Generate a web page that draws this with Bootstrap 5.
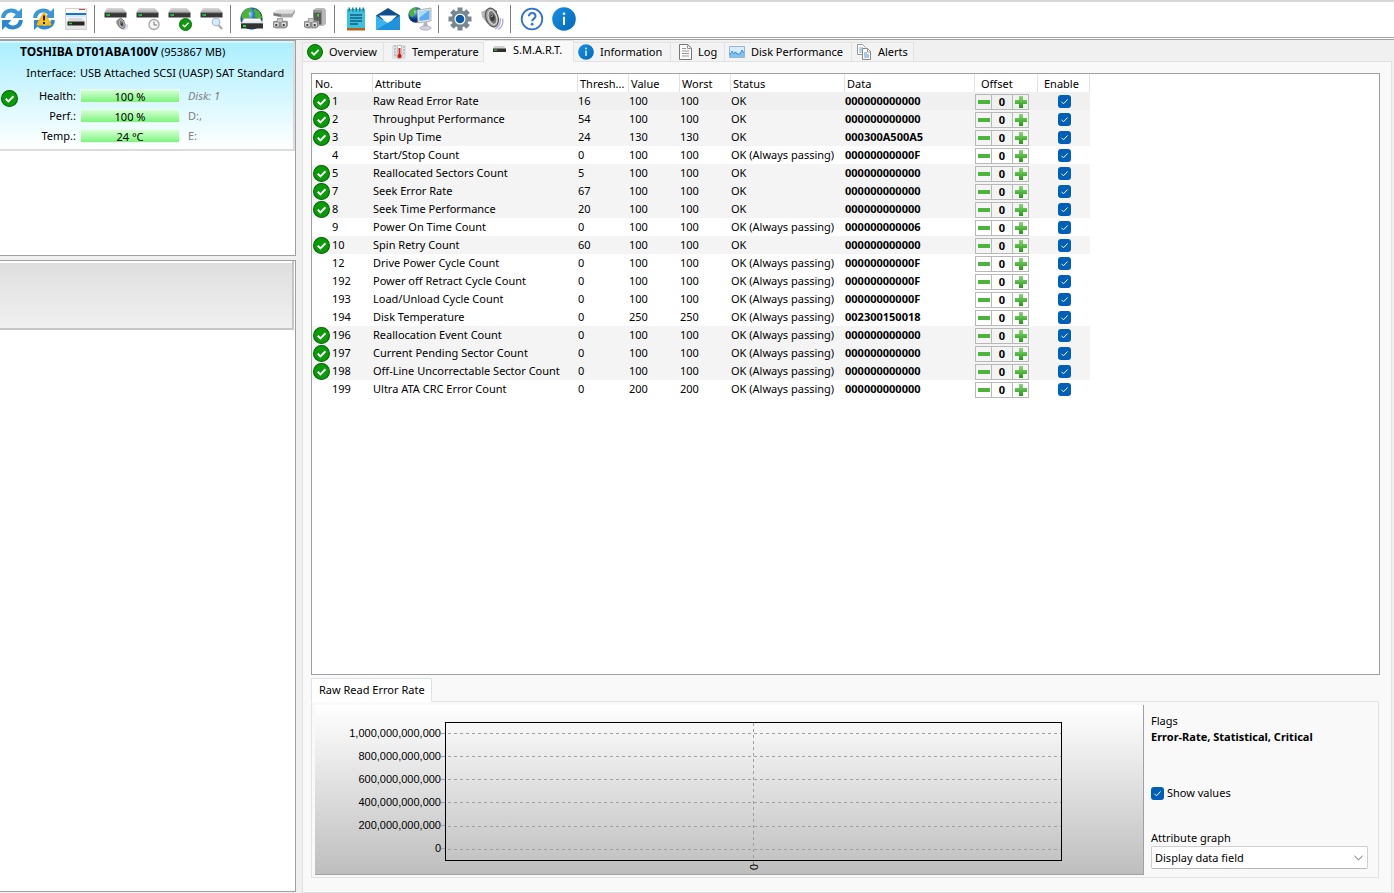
<!DOCTYPE html>
<html lang="en">
<head>
<meta charset="utf-8">
<meta name="viewport" content="width=device-width, initial-scale=1">
<title>Disk monitor - S.M.A.R.T.</title>
<link href="https://cdn.jsdelivr.net/npm/bootstrap@5.3.0/dist/css/bootstrap.min.css" rel="stylesheet">
<style>
  body { font-family: "Noto Sans", "Open Sans", sans-serif; font-size: 11px; line-height: 16px; color: #000; background: #f0f0f0; }
  button { color: inherit; }
  svg { display: block; flex: none; }

  /* toolbar */
  .toolbar { height: 40px; padding-bottom: 1px; background: #fff; border-top: 2px solid #d8d8d8; border-bottom: 3px double #a0a0a0; }
  .toolbar .group + .group { margin-left: 6px; padding-left: 9px; border-left: 1px solid #808080; }
  .tool { width: 24px; height: 28px; padding: 2px 0; border: 0; background: none; }

  /* sidebar */
  .sidebar { width: 296px; padding-bottom: 1px; }
  .panel { background: #fff; border: 1px solid #a0a0a0; border-left: 0; }
  .disk-list { height: 216px; }
  .disk-card { height: 110px; background: linear-gradient(#a9eeff, #fff); border: solid #dcdcdc; border-width: 0 2px 2px 0; box-shadow: inset 0 2px #d4f7ff; }
  .disk-title { padding: 3px 0 0 20px; }
  .disk-title b { font-size: 12px; }
  .disk-facts { display: grid; grid-template-columns: 17px 54px 100px 1fr; column-gap: 4px; grid-auto-rows: 20px; align-items: center; padding-left: 1px; }
  .disk-facts .wide { grid-column: 1 / 3; }
  .disk-facts .rest { grid-column: 3 / 5; }
  .gap-top { margin-top: 3px; }
  .meter { height: 14px; border: 1px solid #e8ffee; background: linear-gradient(#d8ffd8, #7cf57c); line-height: 14px; }
  .dim { color: #808080; }
  .task-panel { height: 69px; margin-right: 1px; background: linear-gradient(#dedede, #f0f0f0); border: solid #c6c6c6; border-width: 0 2px 2px 0; box-shadow: inset 0 2px #fff; }

  /* main tabs */
  .main-area { padding: 0 2px 0 6px; }
  .page-tabs { height: 22px; border: 0; margin-bottom: -1px; align-items: flex-end; position: relative; }
  .page-tabs .nav-link { width: 100%; height: 20px; padding: 0 0 0 4px; margin: 0; gap: 6px; border: 1px solid #e2e2e2; border-left-width: 0; border-radius: 0; background: #f3f3f3; color: #000; white-space: nowrap; }
  .page-tabs .nav-item:first-child .nav-link { border-left-width: 1px; }
  .page-tabs .nav-link.active { height: 22px; background: #f9f9f9; border-color: #e2e2e2 #e2e2e2 #f9f9f9; padding: 0 0 3px 8px; color: #000; }
  .tab-xs { width: 54px; } .tab-s { width: 62px; } .tab-m { width: 82px; } .tab-l { width: 90px; }
  .tab-xl { width: 97px; } .tab-2xl { width: 100px; } .tab-3xl { width: 127px; }
  .page-pane { background: #f9f9f9; border: 1px solid #e2e2e2; padding: 11px 11px 14px 8px; }

  /* attribute table */
  .table-box { background: #fff; border: 1px solid #a0a0a0; min-height: 602px; }
  .attr-table { table-layout: fixed; width: 778px; border-collapse: separate; border-spacing: 0; }
  .attr-table th { height: 18px; padding: 2px 0 0 2px; font-weight: 400; line-height: 16px; border-right: 1px solid #e2e2e2; white-space: nowrap; overflow: hidden; }
  .attr-table th.first { padding-left: 3px; }
  .attr-table th.shifted { padding-left: 6px; }
  .attr-table td { height: 18px; padding: 0; line-height: 18px; white-space: nowrap; }
  .attr-table .checked-row td { background: #f4f4f4; }
  .attr-table .selected-row td { background: #f0f0f0; }
  .no-cell { padding-left: 1px; }
  .icon-slot { width: 19px; }
  .c-no { width: 61px; } .c-name { width: 205px; } .c-thr { width: 51px; } .c-num { width: 51px; }
  .c-status { width: 114px; } .c-data { width: 130px; } .c-off { width: 63px; } .c-on { width: 52px; }
  .stepper { height: 16px; width: 54px; margin-top: 1px; }
  .stepper button { width: 17px; padding: 0; border: 1px solid #b8b8b8; background: transparent; display: flex; align-items: center; justify-content: center; }
  .stepper input { width: 20px; min-width: 0; padding: 0; border: solid #b8b8b8; border-width: 1px 0; text-align: center; font-weight: 700; background: transparent; }
  .tick { appearance: none; width: 13px; height: 13px; margin: 0; border-radius: 3px; display: block; flex: none;
    background: #005fb8 url("data:image/svg+xml,%3Csvg xmlns='http://www.w3.org/2000/svg' viewBox='0 0 13 13'%3E%3Cpath d='M3.5 6.8l2 2 4-4.3' fill='none' stroke='%23fff' stroke-width='1'/%3E%3C/svg%3E"); }

  /* attribute details */
  .details { margin-top: 3px; margin-right: 1px; }
  .detail-tabs { border: 0; margin-bottom: -1px; position: relative; }
  .detail-tabs .nav-link { height: 24px; padding: 0 6px 0 7px; border: 1px solid #e2e2e2; border-bottom-color: #f9f9f9; border-radius: 0; margin: 0; background: #f9f9f9; color: #000; }
  .detail-pane { border: 1px solid #e2e2e2; padding: 3px 10px 2px 3px; }
  .chart { height: 170px; padding: 17px 81px 0 0; background: linear-gradient(#fff, #bebebe); border: solid #a0a0a0; border-width: 0 1px 1px 0; font-family: "Liberation Sans", Arial, sans-serif; }
  .axis { width: 130px; line-height: 23px; }
  .axis div { height: 23px; padding-right: 4px; background: linear-gradient(#a0a0a0, #a0a0a0) right 11px / 4px 1px no-repeat; }
  .plot { height: 139px; border: 1px solid #000;
    --dash: repeating-linear-gradient(90deg, transparent 0 2px, #a0a0a0 2px 5px, transparent 5px 6px);
    background: var(--dash) 0 10px / 100% 1px no-repeat, var(--dash) 0 33px / 100% 1px no-repeat, var(--dash) 0 56px / 100% 1px no-repeat,
      var(--dash) 0 79px / 100% 1px no-repeat, var(--dash) 0 103px / 100% 1px no-repeat, var(--dash) 0 126px / 100% 1px no-repeat,
      repeating-linear-gradient(#a0a0a0 0 3px, transparent 3px 6px) 50% 0 / 1px 100% no-repeat; }
  .x-label { writing-mode: vertical-rl; line-height: 12px; margin: 0 auto; padding-top: 3px; background: linear-gradient(#808080, #808080) center top / 1px 4px no-repeat; }
  .options { width: 217px; margin-left: 7px; padding-top: 8px; }
  .flags { height: 74px; }
  .show-row { height: 43px; gap: 3px; }
  .graph-select { height: 23px; padding: 0 20px 0 3px; font-size: 11px; line-height: 16px; border: 1px solid #d0d0d0; border-bottom-color: #b8b8b8; border-radius: 2px; color: #000;
    background: #fff url("data:image/svg+xml,%3Csvg xmlns='http://www.w3.org/2000/svg' viewBox='0 0 10 6'%3E%3Cpath d='M.5.7L5 5 9.500.7' fill='none' stroke='%23505050'/%3E%3C/svg%3E") right 4px center / 9px 6px no-repeat; }
</style>
</head>
<body>
<svg width="0" height="0" class="position-absolute" aria-hidden="true">
  <defs>
    <linearGradient id="g-top" x2="0" y2="1"><stop stop-color="#dadada"/><stop offset="1" stop-color="#ababab"/></linearGradient>
    <linearGradient id="g-green" x2="0" y2="1"><stop stop-color="#8ed67c"/><stop offset="1" stop-color="#1f9a10"/></linearGradient>
    <radialGradient id="g-globe" cx=".35" cy=".3"><stop stop-color="#d8f2ff"/><stop offset=".5" stop-color="#2d7bd6"/><stop offset="1" stop-color="#0b3278"/></radialGradient>
    <linearGradient id="g-blue" x2="1" y2="1"><stop stop-color="#1691e6"/><stop offset="1" stop-color="#0568b8"/></linearGradient>
    <linearGradient id="g-metal" x2="1"><stop stop-color="#c8c8c8"/><stop offset="1" stop-color="#555"/></linearGradient>
    <linearGradient id="g-paper" x2="0" y2="1"><stop stop-color="#fff"/><stop offset="1" stop-color="#e2e2e2"/></linearGradient>
  </defs>
  <symbol id="ok" viewBox="0 0 16 16"><circle cx="8" cy="8" r="7.500" fill="#0a9a0a" stroke="#056505"/><path d="M4.500 8.200l2.500 2.500 4.700-4.800" fill="none" stroke="#fff" stroke-width="1.800"/></symbol>
  <symbol id="info" viewBox="0 0 24 24"><circle cx="12" cy="12" r="11.800" fill="url(#g-blue)"/><circle cx="12" cy="6.700" r="1.300" fill="#fff"/><path d="M12 9.700v8.300" stroke="#fff" stroke-width="2"/></symbol>
  <symbol id="drive" viewBox="0 0 24 10"><path d="M3 0h16l3.500 4.500h-22z" fill="url(#g-top)"/><path d="M.5 4.500h22V9.500H.5z" fill="#383838"/><path d="M.5 4.700h22" stroke="#888" stroke-width=".6"/><path d="M2.500 6.300h3.500v1.500H2.500z" fill="#23e02a"/></symbol>
  <symbol id="sync" viewBox="0 0 24 24"><path d="M1.200 11C1.200 5 6 1.500 11.500 1.500c3 0 5.300 1 7 2.900L22 1v10H12.500l3.300-3.500C14.500 6.200 13 5.500 11.500 5.500c-3.600 0-6 2.200-6.300 5.500z" fill="#3c96dc"/><path d="M22.800 13c0 6-4.800 9.500-10.300 9.500-3 0-5.300-1-7-2.900L2 23V13h9.500l-3.300 3.500c1.300 1.300 2.800 2 4.300 2 3.600 0 6-2.200 6.300-5.500z" fill="#2c86d0"/></symbol>
  <symbol id="globe" viewBox="0 0 24 24"><circle cx="12" cy="12" r="11.500" fill="url(#g-globe)"/><path d="M1.500 9C3 4 7 1 11 1l2 2-4 3 1 4-3 5-4-1zM15 1.500l5 3 3 6-2 5-3-4-3-1 1-4-2-2z" fill="#4bb52c"/></symbol>
  <symbol id="plug" viewBox="0 0 16 11"><path d="M0 3.500l4-1V0h6v2.500l5 .5v5l-3 2.500H3L0 9z" fill="#a2a2a2"/><path d="M.7 4h5.500v5H.7zM8 4h5.500v5H8z" fill="#dedede" stroke="#6a6a6a" stroke-width=".7"/><path d="M2.300 6h2v2h-2zM9.700 6h2v2h-2z" fill="#444"/><path d="M5 1h4v3H5z" fill="#c8c8c8"/></symbol>
  <symbol id="speaker" viewBox="0 0 24 24"><path d="M15 22c4-2 6-6 5-11M18 22.500c4-2 5.500-6 4.500-11" fill="none" stroke="#aaaad2" stroke-width="1.300"/><path d="M1 5l9-4 7 3-4 15-6-3-5-6z" fill="url(#g-metal)"/><ellipse cx="12" cy="10.500" rx="6" ry="9.700" transform="rotate(-18 12 10.500)" fill="#a8a8a8" stroke="#555" stroke-width="1.200"/><ellipse cx="12.500" cy="10.500" rx="4" ry="7.200" transform="rotate(-18 12.500 10.500)" fill="#787878" stroke="#d8d8d8"/><ellipse cx="12.500" cy="11" rx="2.300" ry="3.300" fill="#3c3c3c"/><path d="M11.500 10l1-1.500" stroke="#ddd"/></symbol>
</svg>

<div class="d-flex flex-column min-vh-100">
  <header class="toolbar d-flex align-items-center flex-shrink-0" role="toolbar" aria-label="Main">
    <div class="group d-flex gap-2">
      <button class="tool" aria-label="Refresh"><svg width="24" height="24"><use href="#sync"/></svg></button>
      <button class="tool" aria-label="Rescan problems"><svg width="24" height="24"><use href="#sync"/><path d="M12 6L18.500 17.500H5.500z" fill="#ffc61a" stroke="#fbb80c" stroke-width="2" stroke-linejoin="round"/><path d="M12 8.500v5M12 15v2" stroke="#222" stroke-width="2"/></svg></button>
      <button class="tool" aria-label="Window view"><svg width="24" height="24"><path d="M1.500 1.500h21v21h-21z" fill="url(#g-paper)" stroke="#d2d2d2"/><path d="M15 2.500h6" stroke="#d04040"/><path d="M2 7h20" stroke="#1673d2" stroke-width="2"/><path d="M2 9h20" stroke="#b9dcff"/><path d="M5.500 11h12l2.500 3.500H3.500z" fill="#dadada"/><path d="M3.500 14.500h17v4h-17z" fill="#252525"/><path d="M5 16.500h3" stroke="#29d62f" stroke-width="1.500"/></svg></button>
    </div>
    <div class="group d-flex gap-2">
      <button class="tool" aria-label="Disk sound"><svg width="24" height="24"><use href="#drive" width="24" height="10" y="1"/><use href="#speaker" width="13" height="13" x="11" y="11"/></svg></button>
      <button class="tool" aria-label="Disk schedule"><svg width="24" height="24"><use href="#drive" width="24" height="10" y="1"/><circle cx="18" cy="17.500" r="5" fill="#f5f5f5" stroke="#a8a8a8" stroke-width="1.400"/><path d="M18 14.500v3.500h3" fill="none" stroke="#777"/></svg></button>
      <button class="tool" aria-label="Disk test"><svg width="24" height="24"><use href="#drive" width="24" height="10" y="1"/><use href="#ok" width="13" height="13" x="11" y="11"/></svg></button>
      <button class="tool" aria-label="Surface scan"><svg width="24" height="24"><use href="#drive" width="24" height="10" y="1"/><path d="M18.500 18l3.500 4" stroke="#b0a8a0" stroke-width="2"/><circle cx="16" cy="15" r="3.800" fill="#d5ebff" stroke="#a8bccb" stroke-width="1.200"/></svg></button>
    </div>
    <div class="group d-flex gap-2">
      <button class="tool" aria-label="Network disk"><svg width="24" height="24"><use href="#globe" width="23" height="23"/><path d="M4 11.500h16l3 5H1z" fill="url(#g-paper)" stroke="#aaa" stroke-width=".5"/><path d="M1 16.500h22v5H1z" fill="#333"/><path d="M3 19h3" stroke="#28df30" stroke-width="2"/></svg></button>
      <button class="tool" aria-label="External drive"><svg width="24" height="24"><path d="M1 5.500l5-3h17l-3 4H9z" fill="#dedede"/><path d="M1 5.500l8 1h11l3-4v3l-3 5H9l-8-2z" fill="#a8a8a8"/><path d="M2 6.500l7 1v2l-7-1z" fill="#777"/><use href="#plug" width="16" height="11" x="1" y="11"/></svg></button>
      <button class="tool" aria-label="Drive dock"><svg width="24" height="24"><path d="M9 3l3-2h8l2 2v14l-3 2H9z" fill="#b8b8b8"/><path d="M9.500 3.500h8v14h-8z" fill="#5c5c5c"/><path d="M9.500 3.500h8v2h-8z" fill="#9a9a9a"/><path d="M13 7h2v2.500h-2z" fill="#2ed735"/><use href="#plug" width="16" height="11" x="0" y="11"/></svg></button>
    </div>
    <div class="group d-flex gap-2">
      <button class="tool" aria-label="Report"><svg width="24" height="24"><path d="M3 2h18v19H3z" fill="#42bfdc"/><path d="M3 21h18v2.500H3z" fill="#b46419"/><path d="M4.500 2.500h16" stroke="#16839f" stroke-width="4" stroke-dasharray="1.500 2"/><path d="M6 8h12M6 11h12M6 14h12M6 17h8" stroke="#0c6380" stroke-width="1.300"/></svg></button>
      <button class="tool" aria-label="Mail"><svg width="24" height="24"><path d="M0 8.500L12 1l12 7.500V13H0z" fill="#0f4f8f"/><path d="M3 8.500h18L12 17z" fill="#fff"/><path d="M0 8.500l14 9L0 23z" fill="#39b4ee"/><path d="M24 8.500V23H0z" fill="#1c94dd"/></svg></button>
      <button class="tool" aria-label="Remote monitoring"><svg width="24" height="24"><use href="#globe" width="16" height="16"/><path d="M9 3l14-2v13l-13 2z" fill="#e4e4e4" stroke="#9a9a9a" stroke-width=".7"/><path d="M11 4.500l10.500-1.500v9.500L11.500 14z" fill="#5dabf2"/><path d="M11 4.500l10.500-1.500L11 11z" fill="#a7dbff"/><path d="M16 15l3 0 1 5H15z" fill="#b2b2c0"/><ellipse cx="17.500" cy="21" rx="5.500" ry="2.200" fill="#d1d1df" stroke="#9999a8" stroke-width=".6"/></svg></button>
    </div>
    <div class="group d-flex gap-2">
      <button class="tool" aria-label="Settings"><svg width="24" height="24"><g stroke="#788790" stroke-width="5"><path d="M12 .5v23M.5 12h23M3.900 3.900l16.200 16.200M20.100 3.900L3.900 20.100"/></g><circle cx="12" cy="12" r="8.500" fill="#788790"/><circle cx="12" cy="12" r="5.500" fill="#fff"/><circle cx="12" cy="12" r="4.300" fill="#0a5ca8"/></svg></button>
      <button class="tool" aria-label="Sound"><svg width="24" height="24"><use href="#speaker" width="24" height="24"/></svg></button>
    </div>
    <div class="group d-flex gap-2">
      <button class="tool" aria-label="Help"><svg width="24" height="24"><circle cx="12" cy="12" r="10.300" fill="#fff" stroke="#2f72cf" stroke-width="1.800"/><path d="M8.800 9.300c0-4.300 6.700-4.200 6.700 0 0 2.600-3.400 2.600-3.400 5" fill="none" stroke="#2f72cf" stroke-width="2"/><circle cx="12.100" cy="17.200" r="1.400" fill="#2f72cf"/></svg></button>
      <button class="tool" aria-label="About"><svg width="24" height="24"><use href="#info"/></svg></button>
    </div>
  </header>

  <div class="d-flex flex-grow-1">
    <aside class="sidebar d-flex flex-column flex-shrink-0">
      <section class="panel disk-list mb-1">
        <div class="disk-card overflow-hidden">
          <div class="disk-title text-nowrap"><b>TOSHIBA DT01ABA100V</b> (953867 MB)</div>
          <div class="disk-facts gap-top">
            <span class="wide text-end">Interface:</span><span class="rest text-nowrap">USB Attached SCSI (UASP) SAT Standard</span>
          </div>
          <div class="disk-facts gap-top">
            <svg width="17" height="17" class="mt-1"><use href="#ok"/></svg><span class="text-end">Health:</span><div class="meter text-center">100 %</div><i class="dim ps-1">Disk: 1</i>
            <span class="wide text-end">Perf.:</span><div class="meter text-center">100 %</div><span class="dim ps-1">D:,</span>
            <span class="wide text-end">Temp.:</span><div class="meter text-center">24 °C</div><span class="dim ps-1">E:</span>
          </div>
        </div>
      </section>
      <section class="panel flex-grow-1"><div class="task-panel"></div></section>
    </aside>

    <main class="main-area flex-grow-1 d-flex flex-column">
      <ul class="nav nav-tabs page-tabs flex-nowrap">
        <li class="nav-item tab-m"><button class="nav-link d-flex align-items-center"><svg width="16" height="16"><use href="#ok"/></svg>Overview</button></li>
        <li class="nav-item tab-2xl"><button class="nav-link d-flex align-items-center ps-2"><svg width="14" height="16"><path d="M0 1h14v14H0z" fill="#dde3e8"/><path d="M2 2h2M2 5h2M2 8h2M2 11h2M11 3h2M11 6h2M11 9h2" stroke="#9aa4ac"/><path d="M5.500 1.500h4V9a3.300 3.300 0 1 1-4 0z" fill="#fff" stroke="#c9b8b8"/><path d="M7.500 4v8" stroke="#d72a20" stroke-width="2"/><circle cx="7.500" cy="12" r="2.200" fill="#c91c12"/></svg>Temperature</button></li>
        <li class="nav-item tab-l"><button class="nav-link active d-flex align-items-center" aria-current="page"><svg width="15" height="7"><path d="M2 0h10l2 3H1z" fill="#d0d0d0"/><path d="M1 2.500h13V6H1z" fill="#303030"/><path d="M2 4h3" stroke="#35c935" stroke-width="1.200"/></svg>S.M.A.R.T.</button></li>
        <li class="nav-item tab-xl"><button class="nav-link d-flex align-items-center"><svg width="16" height="16"><use href="#info"/></svg>Information</button></li>
        <li class="nav-item tab-xs"><button class="nav-link d-flex align-items-center ps-2"><svg width="13" height="16"><path d="M.5.5h8L12.500 4v11.500H.5z" fill="#fafafa" stroke="#777"/><path d="M8.500.5V4.500H12.500M3 4.500h4M3 7h7M3 9.500h7M3 12h7" fill="none" stroke="#999"/></svg>Log</button></li>
        <li class="nav-item tab-3xl"><button class="nav-link d-flex align-items-center"><svg width="16" height="12"><path d="M.5.5h15v11H.5z" fill="#d4ecfb" stroke="#9ab6ca"/><path d="M1 9l2-3 2 2 2-3 2 3h2l2-4 2 3v4H1z" fill="#7fc2f2"/><path d="M1 9l2-4 2 3 1-2 2 2 3 0 2-4 2 3" fill="none" stroke="#3c8ed8"/></svg>Disk Performance</button></li>
        <li class="nav-item tab-s"><button class="nav-link d-flex align-items-center"><svg width="16" height="16"><path d="M1.500.5h5l3 3v7h-8z" fill="#fff" stroke="#999"/><path d="M3 4h4M3 6h5M3 8h5" stroke="#76a9e2"/><path d="M6.500 4.500h5l3 3v8h-8z" fill="#fff" stroke="#888"/><path d="M11.500 5v3h3" fill="none" stroke="#999"/><path d="M8 9h3M8 11h5M8 13h5" stroke="#5790d5"/></svg>Alerts</button></li>
      </ul>

      <div class="page-pane flex-grow-1 d-flex flex-column">
        <div class="table-box flex-grow-1">
          <table class="attr-table">
            <colgroup><col class="c-no"><col class="c-name"><col class="c-thr"><col class="c-num"><col class="c-num"><col class="c-status"><col class="c-data"><col class="c-off"><col class="c-on"></colgroup>
            <thead><tr><th class="first">No.</th><th>Attribute</th><th>Thresh...</th><th>Value</th><th>Worst</th><th>Status</th><th>Data</th><th class="shifted">Offset</th><th class="shifted">Enable</th></tr></thead>
            <tbody id="attributes"></tbody>
          </table>
        </div>

        <section class="details">
          <ul class="nav nav-tabs detail-tabs"><li class="nav-item"><button class="nav-link active">Raw Read Error Rate</button></li></ul>
          <div class="detail-pane d-flex">
            <div class="chart flex-grow-1 d-flex">
              <div class="axis text-end">
                <div>1,000,000,000,000</div><div>800,000,000,000</div><div>600,000,000,000</div><div>400,000,000,000</div><div>200,000,000,000</div><div>0</div>
              </div>
              <div class="flex-grow-1 d-flex flex-column">
                <div class="plot"></div>
                <div class="x-label">0</div>
              </div>
            </div>
            <div class="options flex-shrink-0">
              <div class="flags">Flags<br><b>Error-Rate, Statistical, Critical</b></div>
              <div class="show-row d-flex align-items-start"><input class="tick" type="checkbox" id="show-values" checked><label for="show-values" class="lh-1">Show values</label></div>
              <label for="graph-kind">Attribute graph</label>
              <select id="graph-kind" class="form-select graph-select"><option>Display data field</option></select>
            </div>
          </div>
        </section>
      </div>
    </main>
  </div>
</div>

<script src="https://cdn.jsdelivr.net/npm/bootstrap@5.3.0/dist/js/bootstrap.bundle.min.js"></script>
<script>
  // number, name, threshold, value, worst, data, evaluated (false = always passing), has status icon
  const rows = [
    [1, 'Raw Read Error Rate', 16, 100, 100, '000000000000', 1, 1],
    [2, 'Throughput Performance', 54, 100, 100, '000000000000', 1, 1],
    [3, 'Spin Up Time', 24, 130, 130, '000300A500A5', 1, 1],
    [4, 'Start/Stop Count', 0, 100, 100, '00000000000F', 0, 0],
    [5, 'Reallocated Sectors Count', 5, 100, 100, '000000000000', 1, 1],
    [7, 'Seek Error Rate', 67, 100, 100, '000000000000', 1, 1],
    [8, 'Seek Time Performance', 20, 100, 100, '000000000000', 1, 1],
    [9, 'Power On Time Count', 0, 100, 100, '000000000006', 0, 0],
    [10, 'Spin Retry Count', 60, 100, 100, '000000000000', 1, 1],
    [12, 'Drive Power Cycle Count', 0, 100, 100, '00000000000F', 0, 0],
    [192, 'Power off Retract Cycle Count', 0, 100, 100, '00000000000F', 0, 0],
    [193, 'Load/Unload Cycle Count', 0, 100, 100, '00000000000F', 0, 0],
    [194, 'Disk Temperature', 0, 250, 250, '002300150018', 0, 0],
    [196, 'Reallocation Event Count', 0, 100, 100, '000000000000', 0, 1],
    [197, 'Current Pending Sector Count', 0, 100, 100, '000000000000', 0, 1],
    [198, 'Off-Line Uncorrectable Sector Count', 0, 100, 100, '000000000000', 0, 1],
    [199, 'Ultra ATA CRC Error Count', 0, 200, 200, '000000000000', 0, 0]
  ];
  document.getElementById('attributes').innerHTML = rows.map(([no, name, thr, val, worst, data, evaluated, icon], i) => `
    <tr class="${icon ? 'checked-row' : ''} ${i === 0 ? 'selected-row' : ''}">
      <td><div class="d-flex align-items-center no-cell"><span class="icon-slot">${icon ? '<svg width="17" height="17"><use href="#ok"/></svg>' : ''}</span>${no}</div></td>
      <td>${name}</td><td>${thr}</td><td>${val}</td><td>${worst}</td>
      <td>${evaluated ? 'OK' : 'OK (Always passing)'}</td><td><b>${data}</b></td>
      <td><div class="stepper d-flex">
        <button aria-label="Decrease ${name}"><svg width="12" height="4"><path d="M0 0h12v4H0z" fill="#4cb43a"/></svg></button>
        <input type="text" value="0" aria-label="Offset of ${name}">
        <button aria-label="Increase ${name}"><svg width="12" height="12"><path d="M4 0h4v4h4v4H8v4H4V8H0V4h4z" fill="url(#g-green)"/></svg></button>
      </div></td>
      <td><input class="tick mx-auto" type="checkbox" checked aria-label="Enable ${name}"></td>
    </tr>`).join('');
</script>
</body>
</html>
